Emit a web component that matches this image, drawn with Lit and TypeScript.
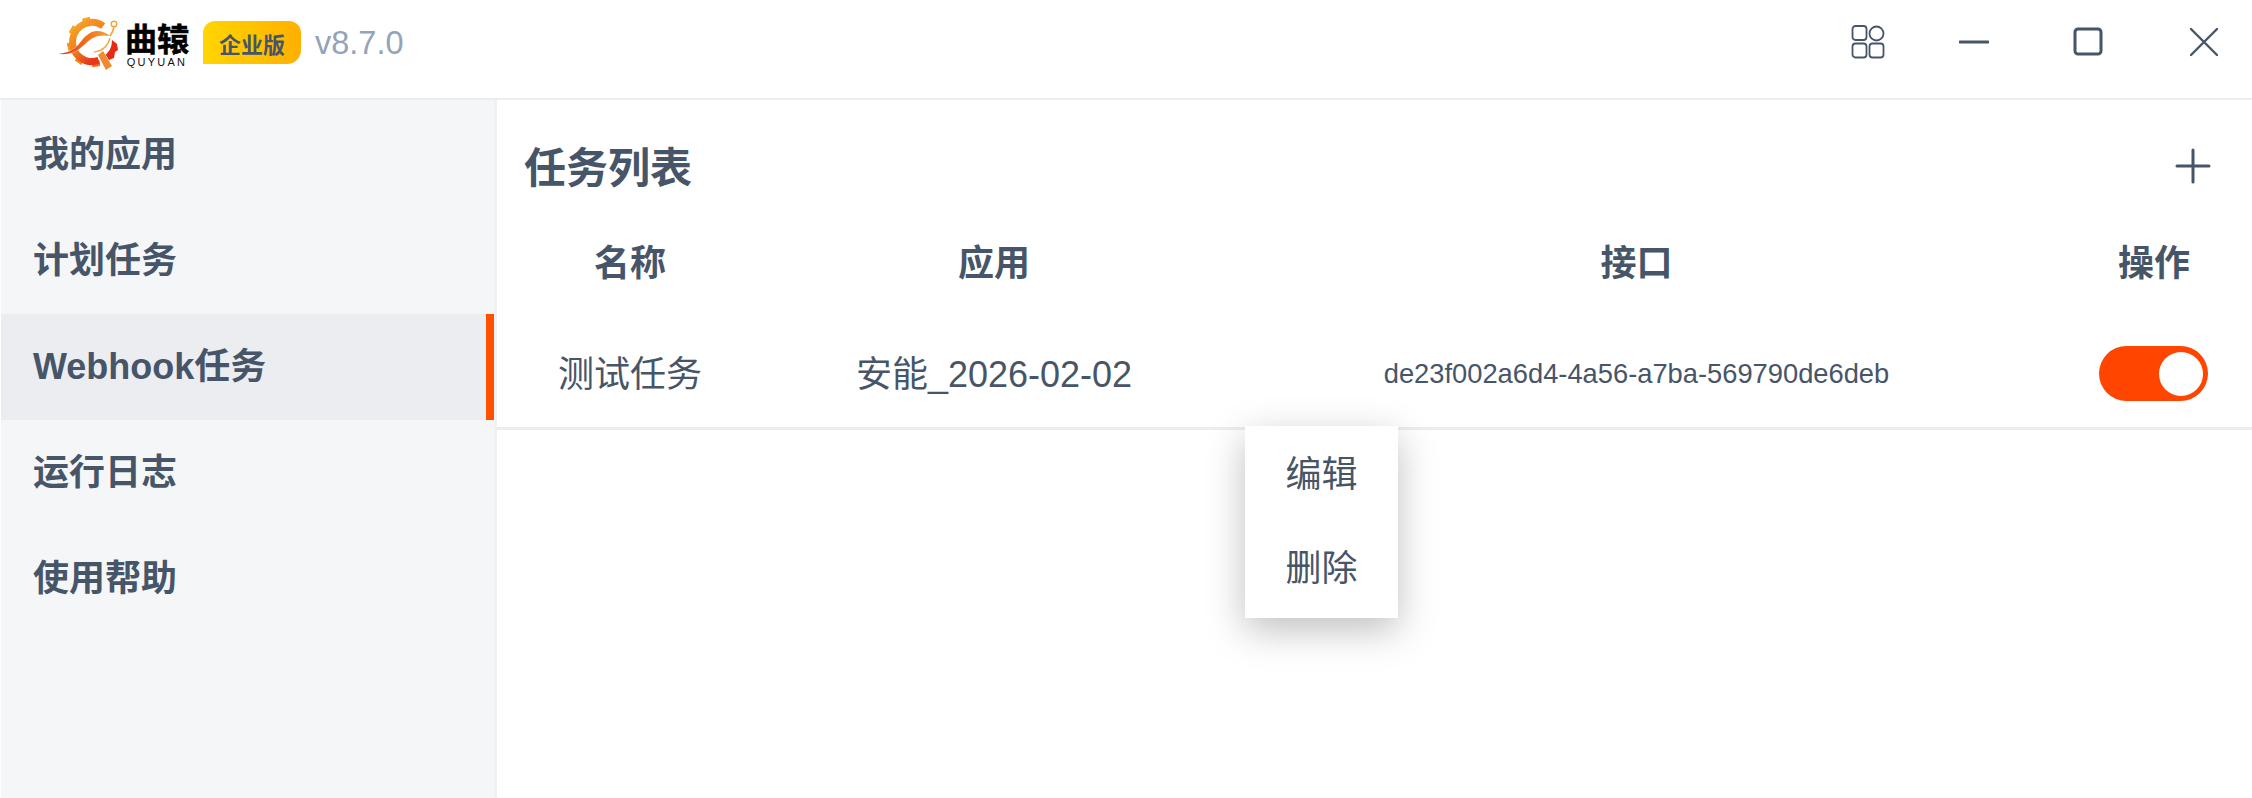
import { LitElement, html, css, svg } from "lit";
import { customElement } from "lit/decorators.js";

const NAV = ["我的应用", "计划任务", "Webhook任务", "运行日志", "使用帮助"];
const TEETH: [number, string][] = [
  [-14, "#f7a623"],
  [-58, "#f7a623"],
  [-102, "#f59a23"],
  [-146, "#f28c20"],
  [170, "#ef6f1c"],
  [128, "#ec541a"],
];

@customElement("app-root")
export class AppRoot extends LitElement {
  static styles = css`
    :host {
      display: block;
      position: relative;
      width: 2252px;
      height: 798px;
      overflow: hidden;
      background: #fff;
      color: #475569;
      font-family: "Liberation Sans", "Noto Sans CJK SC", sans-serif;
    }
    .top {
      height: 98px;
      display: flex;
      align-items: flex-start;
      box-sizing: border-box;
      padding-left: 55px;
    }
    .logo { display: flex; align-items: flex-start; margin-top: 12px; }
    .mark { width: 70px; height: 62px; display: block; }
    .word { display: flex; flex-direction: column; align-items: center; width: 64px; margin-top: 13px; color: #000; }
    .word b { font-size: 32px; line-height: 31px; font-weight: 700; white-space: nowrap; -webkit-text-stroke: 0.5px #000; }
    .word span { font-size: 11px; line-height: 12px; letter-spacing: 2.2px; white-space: nowrap; color: #111; }
    .badge {
      margin-left: 14px;
      margin-top: 21px;
      width: 98px;
      height: 43px;
      border-radius: 12px 12px 14px 0;
      background: linear-gradient(90deg, #ffd500, #ffb000);
      display: flex;
      align-items: center;
      justify-content: center;
      font-size: 22px;
      font-weight: 700;
    }
    .ver { margin-left: 14px; margin-top: 25px; font-size: 32.5px; color: #94a3b8; }
    .win { margin-left: auto; display: flex; align-items: center; margin-top: 25px; }
    .win svg { display: block; fill: none; stroke: #475569; }
    .i1 { width: 34px; height: 34px; margin-right: 74px; stroke-width: 1.8; }
    .i2 { width: 30px; height: 30px; margin-right: 84px; stroke-width: 3; }
    .i3 { width: 30px; height: 30px; margin-right: 86px; stroke-width: 3; }
    .i4 { width: 30px; height: 30px; margin-right: 33px; stroke-width: 2.4; }
    .main { display: flex; height: 700px; border-top: 2px solid #ecedf1; }
    nav {
      width: 493px;
      margin-left: 1px;
      background: #f5f6f8;
      flex: none;
      box-sizing: border-box;
      padding-top: 2px;
    }
    .item {
      height: 106px;
      display: flex;
      align-items: center;
      padding: 0 0 8px 32px;
      font-size: 36px;
      font-weight: 700;
      box-sizing: border-box;
    }
    .item.on { background: #ecedf1; border-right: 8px solid #ff5000; }
    .content { flex: 1; border-left: 3px solid #f0f1f4; min-width: 0; }
    .head {
      display: flex;
      align-items: center;
      justify-content: space-between;
      height: 128px;
      padding: 0 41px 0 27px;
    }
    h1 { margin: 0; font-size: 42px; font-weight: 700; }
    .plus { width: 36px; height: 36px; display: block; margin-top: 4px; fill: none; stroke: #475569; stroke-width: 3; stroke-linecap: round; }
    .row {
      display: grid;
      grid-template-columns: 266px 462px 831px 196px;
      text-align: center;
      align-items: center;
    }
    .row > :nth-child(3) { padding-right: 8px; }
    .th { height: 64px; margin-bottom: 22px; font-size: 36px; font-weight: 700; }
    .tr { height: 113px; font-size: 36px; border-bottom: 3px solid #ecedf1; }
    .key { font-size: 27.3px; margin-top: 6px; }
    .sw {
      justify-self: center;
      width: 109px;
      height: 55px;
      margin: 6px 0 0 -1px;
      border-radius: 28px;
      background: #ff4500;
      display: flex;
      align-items: center;
      justify-content: flex-end;
      padding-right: 5px;
      box-sizing: border-box;
    }
    .sw i { width: 44px; height: 44px; border-radius: 50%; background: #fff; display: block; }
    .menu {
      position: absolute;
      left: 1245px;
      top: 426px;
      width: 153px;
      height: 192px;
      background: #fff;
      box-shadow: 0 12px 36px rgba(0, 0, 0, 0.25);
      display: flex;
      flex-direction: column;
      font-size: 36px;
      text-align: center;
    }
    .menu div { height: 94px; padding-bottom: 4px; box-sizing: border-box; display: flex; align-items: center; justify-content: center; }
  `;

  render() {
    return html`
      <header class="top">
        <div class="logo">
          <svg class="mark" viewBox="55 12 70 62">
            <defs>
              <linearGradient id="g" x1="0" y1="0" x2="0.6" y2="1">
                <stop offset="0" stop-color="#f8a825" />
                <stop offset="0.6" stop-color="#f07a1e" />
                <stop offset="1" stop-color="#e8381a" />
              </linearGradient>
              <linearGradient id="s" x1="0" y1="0" x2="1" y2="0">
                <stop offset="0" stop-color="#e62a12" />
                <stop offset="0.5" stop-color="#ee6a1c" />
                <stop offset="1" stop-color="#f5a33a" />
              </linearGradient>
            </defs>
            ${TEETH.map(
              ([a, c]) => svg`<rect x="88" y="17" width="8" height="6" fill=${c} transform="rotate(${a} 92 42)" />`
            )}
            <path d="M103.2 26A19.5 19.5 0 1 0 98.7 60.3" fill="none" stroke="url(#g)" stroke-width="7" />
            <path d="M112 40L117 44L118 50L115 52L114 58L108 60L104 56C110 52 112 46 112 40Z" fill="#e62a12" />
            <path d="M58 54C68 53 74 50 79 44C84 37 90 31 97 31C102 31 107 33 110 36C104 35 98 35 93 38C86 42 82 48 76 51C70 54 64 54.5 58 54Z" fill="url(#s)" stroke="#fff" stroke-width="0.6" paint-order="stroke" />
            <path d="M110 38C108 46 102 51 94 52" fill="none" stroke="#f5a33a" stroke-width="1.2" />
            <path d="M110 36C112 33 113.5 30 114 27" fill="none" stroke="#f5a33a" stroke-width="1.6" />
            <circle cx="114" cy="24" r="2.8" fill="#fff" stroke="#f5a33a" stroke-width="1.4" />
            <path d="M98 55L103 51L112 66L106 70Z" fill="#f08a30" stroke="#fff" stroke-width="1" paint-order="stroke" />
          </svg>
          <div class="word"><b>曲辕</b><span>QUYUAN</span></div>
        </div>
        <div class="badge">企业版</div>
        <div class="ver">v8.7.0</div>
        <div class="win">
          <svg class="i1" viewBox="0 0 34 34">
            <rect x="1.5" y="1" width="14" height="14" rx="3" />
            <circle cx="25.5" cy="8.5" r="7" />
            <rect x="1.5" y="18.5" width="14" height="14" rx="3" />
            <rect x="18.5" y="18.5" width="14" height="14" rx="3" />
          </svg>
          <svg class="i2" viewBox="0 0 30 30"><path d="M1 15H29" stroke-linecap="round" /></svg>
          <svg class="i3" viewBox="0 0 30 30"><rect x="2" y="2" width="26" height="25" rx="3" /></svg>
          <svg class="i4" viewBox="0 0 30 30"><path d="M2 2L28 28M28 2L2 28" stroke-linecap="round" /></svg>
        </div>
      </header>
      <div class="main">
        <nav>
          ${NAV.map((n, i) => html`<div class="item ${i === 2 ? "on" : ""}">${n}</div>`)}
        </nav>
        <section class="content">
          <div class="head">
            <h1>任务列表</h1>
            <svg class="plus" viewBox="0 0 36 36"><path d="M18 2V34M2 18H34" /></svg>
          </div>
          <div class="row th">
            <div>名称</div><div>应用</div><div>接口</div><div>操作</div>
          </div>
          <div class="row tr">
            <div>测试任务</div>
            <div>安能_2026-02-02</div>
            <div class="key">de23f002a6d4-4a56-a7ba-569790de6deb</div>
            <div class="sw"><i></i></div>
          </div>
        </section>
      </div>
      <div class="menu"><div>编辑</div><div>删除</div></div>
    `;
  }
}
